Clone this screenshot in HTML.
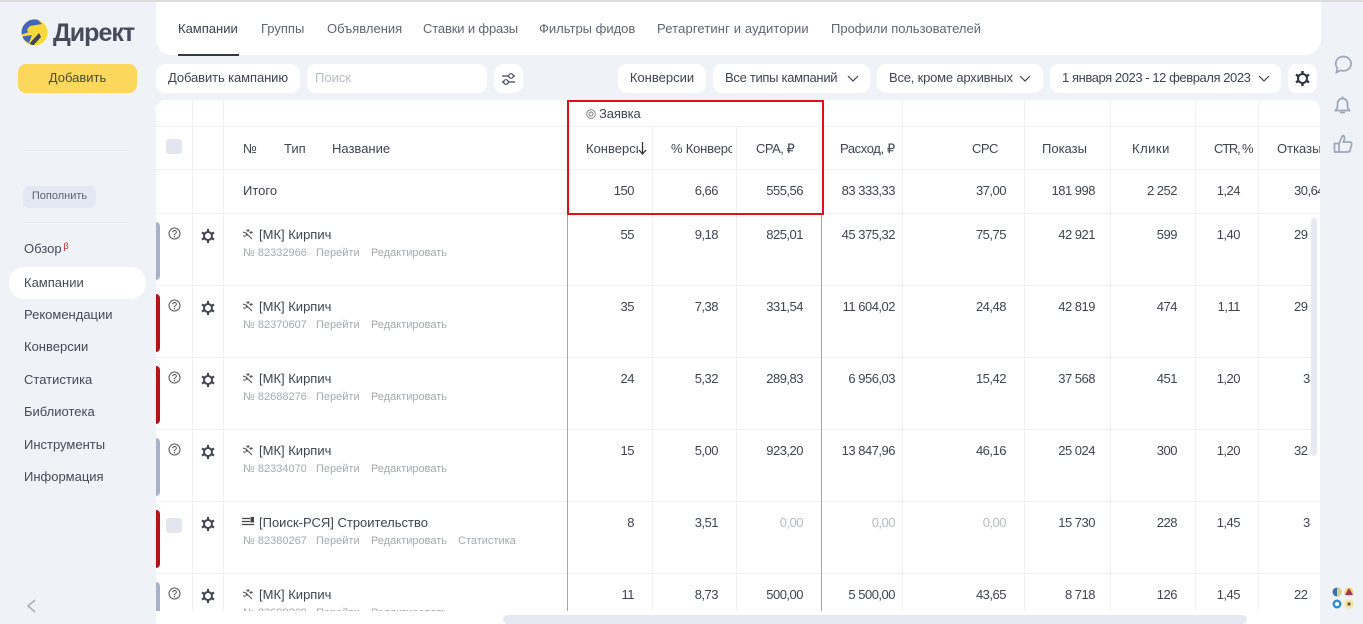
<!DOCTYPE html>
<html lang="ru"><head><meta charset="utf-8"><title>Директ</title>
<style>
*{box-sizing:border-box}
html,body{margin:0;padding:0;width:1363px;height:624px;overflow:hidden}
body{position:relative;background:#eff2f7;font:13px/16px "Liberation Sans",sans-serif;color:#3f4450}
.a{position:absolute;white-space:nowrap}
.btn{position:absolute;background:#fff;border-radius:9px;height:29px;line-height:28px;white-space:nowrap;top:64px}
.tab{position:absolute;top:21px;color:#5f6570;white-space:nowrap;line-height:16px}
.nav{position:absolute;left:24px;white-space:nowrap;color:#444a55}
.vl{position:absolute;width:1px;background:#eef0f3;top:100px;height:511px}
.hl{position:absolute;height:1px;background:#eef0f3;left:156px;width:1164px}
.hd{position:absolute;top:141px;white-space:nowrap}
.row{position:absolute;left:156px;width:1164px;height:72px;overflow:hidden}
.row span{position:absolute;top:13px;white-space:nowrap}
.c1,.c2,.c3,.c4,.c5,.c6,.c7,.c8,.c9{letter-spacing:-.5px}
.c1{right:686px}.c2{right:602px}.c3{right:517px}.c4{right:425px}.c5{right:314px}.c6{right:225px}.c7{right:143px}.c8{right:80px}
.row .c9{left:1138px}
.row .c9.s{left:1147px}
.row .g{color:#b7bac0}
.row .nm{left:103px;top:13px}
.sub{left:87px;top:31px;font-size:11px;color:#a6a9af;line-height:16px}
.sub b{font-weight:400;position:absolute;top:0}
.b1{left:0}.b2{left:73px}.b3{left:128px}.b4{left:215px}
.bar{position:absolute;left:0;top:8px;width:4px;height:58px;border-radius:0 4px 4px 0;background:#a9b3c8}
.red{background:#b5121b}
.cb{position:absolute;left:10px;top:16px;width:16px;height:15px;border-radius:3px;background:#e3e6ee}
svg{position:absolute;overflow:visible}
</style></head>
<body>
<div class="a" style="left:0;top:0;width:1363px;height:2px;background:#dcdcdc"></div>

<svg style="left:21px;top:19px" width="27" height="27" viewBox="0 0 27 27"><circle cx="13.500" cy="13.500" r="13" fill="#f9d93a"/><path d="M.5 13.500A13 13 0 0 1 17 .9L21 5 9 7C6 10 5 12 8 13L.8 15.500z" fill="#4366b5"/><path d="M1.500 17.500L11 16 8 24C4.500 22.500 2.500 20.500 1.500 17.500z" fill="#4366b5"/><path d="M8.500 24.500L18 14 20 18 12.500 26.200C11 26 9.700 25.300 8.500 24.500z" fill="#3f4555"/></svg>
<div class="a" style="left:53px;top:16px;font-size:25px;line-height:34px;font-weight:700;color:#454b59;letter-spacing:-1px">Директ</div>
<div class="a" style="left:18px;top:64px;width:119px;height:29px;background:#fbd75b;border-radius:8px;text-align:center;line-height:28px;color:#4b4a3c">Добавить</div>
<div class="a" style="left:24px;top:150px;width:104px;height:1px;background:#e6e9ef"></div>
<div class="a" style="left:23px;top:186px;width:73px;height:22px;background:#e3e8f2;border-radius:6px;text-align:center;line-height:21px;font-size:11px;color:#5d636e">Пополнить</div>
<div class="a" style="left:24px;top:222px;width:104px;height:1px;background:#e6e9ef"></div>
<div class="a" style="left:9px;top:267px;width:137px;height:32px;background:#fff;border-radius:15px"></div>
<div class="nav" style="top:241px">Обзор<span style="color:#c2242c;font-size:9px;position:relative;top:-4px;left:2px">β</span></div>
<div class="nav" style="top:275px">Кампании</div>
<div class="nav" style="top:307px">Рекомендации</div>
<div class="nav" style="top:339px">Конверсии</div>
<div class="nav" style="top:372px">Статистика</div>
<div class="nav" style="top:404px">Библиотека</div>
<div class="nav" style="top:437px">Инструменты</div>
<div class="nav" style="top:469px">Информация</div>
<svg style="left:25px;top:599px" width="12" height="14" viewBox="0 0 12 14"><path d="M10 1L3 7l7 6" fill="none" stroke="#a9b1c0" stroke-width="1.600"/></svg>

<div class="a" style="left:156px;top:2px;width:1165px;height:53px;background:#fff;border-radius:0 0 16px 16px"></div>
<div class="tab" style="left:178px;color:#3a3f4a">Кампании</div>
<div class="a" style="left:178px;top:54px;width:61px;height:2px;background:#333844"></div>
<div class="tab" style="left:261px">Группы</div>
<div class="tab" style="left:327px">Объявления</div>
<div class="tab" style="left:423px;letter-spacing:-.15px">Ставки и фразы</div>
<div class="tab" style="left:539px">Фильтры фидов</div>
<div class="tab" style="left:657px;letter-spacing:.13px">Ретаргетинг и аудитории</div>
<div class="tab" style="left:831px">Профили пользователей</div>

<div class="btn" style="left:156px;width:144px;padding-left:12px;letter-spacing:-.1px">Добавить кампанию</div>
<div class="btn" style="left:307px;width:180px;padding-left:8px;color:#b8bbc2">Поиск</div>
<div class="btn" style="left:494px;width:29px"></div>
<svg style="left:494px;top:64px" width="29" height="29" viewBox="0 0 29 29"><path d="M8 12h13M8 18h13" stroke="#3f4450" stroke-width="1.200"/><circle cx="17" cy="12" r="2.300" fill="#fff" stroke="#3f4450" stroke-width="1.200"/><circle cx="12" cy="18" r="2.300" fill="#fff" stroke="#3f4450" stroke-width="1.200"/></svg>
<div class="btn" style="left:618px;width:88px;text-align:center">Конверсии</div>
<div class="btn" style="left:713px;width:157px;padding-left:12px;letter-spacing:-.3px">Все типы кампаний</div>
<svg style="left:847px;top:75px" width="12" height="7" viewBox="0 0 12 7"><path d="M1 1l5 5 5-5" fill="none" stroke="#3f4450" stroke-width="1.200"/></svg>
<div class="btn" style="left:877px;width:166px;padding-left:12px;letter-spacing:-.2px">Все, кроме архивных</div>
<svg style="left:1019px;top:75px" width="12" height="7" viewBox="0 0 12 7"><path d="M1 1l5 5 5-5" fill="none" stroke="#3f4450" stroke-width="1.200"/></svg>
<div class="btn" style="left:1050px;width:231px;padding-left:12px;letter-spacing:-.43px">1 января 2023 - 12 февраля 2023</div>
<svg style="left:1258px;top:75px" width="12" height="7" viewBox="0 0 12 7"><path d="M1 1l5 5 5-5" fill="none" stroke="#3f4450" stroke-width="1.200"/></svg>
<div class="btn" style="left:1288px;width:29px"></div>
<svg style="left:1295px;top:71px" width="15" height="15" viewBox="0 0 15 15"><circle cx="7.500" cy="7.500" r="4.500" fill="none" stroke="#30343d" stroke-width="2"/><path d="M7.500 0v3M7.500 12v3M1 3.700l2.600 1.500M11.400 9.800L14 11.300M1 11.300l2.600-1.500M11.400 5.200L14 3.700" stroke="#30343d" stroke-width="2.400"/></svg>

<div class="a" style="left:156px;top:100px;width:1164px;height:511px;background:#fff;border-radius:10px 10px 0 0"></div>
<div class="a" style="left:156px;top:611px;width:1165px;height:13px;background:#fff"></div>
<div class="a" style="left:1320px;top:100px;width:1px;height:524px;background:#eff2f7"></div>

<div class="vl" style="left:192px"></div><div class="vl" style="left:223px"></div>
<div class="vl" style="left:652px;top:126px;height:485px"></div><div class="vl" style="left:736px;top:126px;height:485px"></div>
<div class="vl" style="left:902px"></div><div class="vl" style="left:1024px"></div><div class="vl" style="left:1110px"></div><div class="vl" style="left:1195px"></div><div class="vl" style="left:1258px"></div>
<div class="hl" style="top:126px"></div><div class="hl" style="top:169px"></div><div class="hl" style="top:213px"></div><div class="hl" style="top:285px"></div><div class="hl" style="top:357px"></div><div class="hl" style="top:429px"></div><div class="hl" style="top:501px"></div><div class="hl" style="top:573px"></div>
<div class="a" style="left:567px;top:214px;width:1px;height:397px;background:#a3a6ab"></div>
<div class="a" style="left:821px;top:214px;width:1px;height:397px;background:#a3a6ab"></div>

<div class="a" style="left:166px;top:139px;width:16px;height:15px;border-radius:3px;background:#e3e6ee"></div>
<div class="hd" style="left:243px">№</div><div class="hd" style="left:284px">Тип</div><div class="hd" style="left:332px">Название</div>
<svg style="left:586px;top:109px" width="10" height="10" viewBox="0 0 10 10"><circle cx="5" cy="5" r="4.300" fill="none" stroke="#777" stroke-width=".9"/><circle cx="5" cy="5" r="2" fill="none" stroke="#777" stroke-width=".9"/></svg>
<div class="a" style="left:599px;top:106px;letter-spacing:-.1px">Заявка</div>
<div class="a hd" style="left:586px;width:52px;overflow:hidden">Конверсии</div>
<svg style="left:638px;top:142px" width="9" height="13" viewBox="0 0 9 13"><path d="M4.500 0v12M1 8l3.500 4L8 8" fill="none" stroke="#333" stroke-width="1.300"/></svg>
<div class="a hd" style="left:671px;width:61px;overflow:hidden;letter-spacing:-.2px">% Конверсии</div>
<div class="a hd" style="left:756px;letter-spacing:-.5px">CPA, ₽</div>
<div class="a hd" style="left:840px;letter-spacing:-.4px">Расход, ₽</div>
<div class="a hd" style="left:972px;letter-spacing:-.5px">CPC</div>
<div class="a hd" style="left:1042px">Показы</div>
<div class="a hd" style="left:1132px;letter-spacing:.5px">Клики</div>
<div class="a hd" style="left:1214px;letter-spacing:-1.2px">CTR, %</div>
<div class="a hd" style="left:1277px;width:43px;overflow:hidden">Отказы</div>

<div class="row" style="top:170px;height:43px">
<span style="left:87px;top:13px">Итого</span><span class="c1">150</span><span class="c2">6,66</span><span class="c3">555,56</span><span class="c4">83 333,33</span><span class="c5">37,00</span><span class="c6">181 998</span><span class="c7">2 252</span><span class="c8">1,24</span><span class="c9">30,64</span>
</div>

<div class="row" style="top:214px"><i class="bar"></i>
<svg style="left:12px;top:13px" width="13" height="13" viewBox="0 0 13 13"><circle cx="6.500" cy="6.500" r="5.500" fill="none" stroke="#555" stroke-width="1"/><path d="M4.700 5.200c0-2.300 3.700-2.300 3.700 0 0 1.300-1.900 1.300-1.900 2.800" fill="none" stroke="#555"/><circle cx="6.500" cy="9.500" r=".7" fill="#555"/></svg>
<svg style="left:45px;top:15px" width="14" height="14" viewBox="0 0 15 15"><circle cx="7.500" cy="7.500" r="4.300" fill="none" stroke="#454a55" stroke-width="2.200"/><path d="M7.500 0v3M7.500 12v3M1 3.700l2.600 1.500M11.400 9.800L14 11.300M1 11.300l2.600-1.500M11.400 5.200L14 3.700" stroke="#454a55" stroke-width="2.400"/></svg>
<svg style="left:86px;top:14px" width="11" height="11" viewBox="0 0 11 11"><path d="M1 4l3 1 1 3M4 5l6 6M6 1v3M4.500 2.500h3M1 8h3M9 3v3M7.500 4.500h3" fill="none" stroke="#555" stroke-width="1.100"/></svg>
<span class="nm">[МК] Кирпич</span>
<div class="sub a"><b class="b1">№ 82332966</b><b class="b2">Перейти</b><b class="b3">Редактировать</b></div>
<span class="c1">55</span><span class="c2">9,18</span><span class="c3">825,01</span><span class="c4">45 375,32</span><span class="c5">75,75</span><span class="c6">42 921</span><span class="c7">599</span><span class="c8">1,40</span><span class="c9">29</span></div>

<div class="row" style="top:286px"><i class="bar red"></i>
<svg style="left:12px;top:13px" width="13" height="13" viewBox="0 0 13 13"><circle cx="6.500" cy="6.500" r="5.500" fill="none" stroke="#555" stroke-width="1"/><path d="M4.700 5.200c0-2.300 3.700-2.300 3.700 0 0 1.300-1.900 1.300-1.900 2.800" fill="none" stroke="#555"/><circle cx="6.500" cy="9.500" r=".7" fill="#555"/></svg>
<svg style="left:45px;top:15px" width="14" height="14" viewBox="0 0 15 15"><circle cx="7.500" cy="7.500" r="4.300" fill="none" stroke="#454a55" stroke-width="2.200"/><path d="M7.500 0v3M7.500 12v3M1 3.700l2.600 1.500M11.400 9.800L14 11.300M1 11.300l2.600-1.500M11.400 5.200L14 3.700" stroke="#454a55" stroke-width="2.400"/></svg>
<svg style="left:86px;top:14px" width="11" height="11" viewBox="0 0 11 11"><path d="M1 4l3 1 1 3M4 5l6 6M6 1v3M4.500 2.500h3M1 8h3M9 3v3M7.500 4.500h3" fill="none" stroke="#555" stroke-width="1.100"/></svg>
<span class="nm">[МК] Кирпич</span>
<div class="sub a"><b class="b1">№ 82370607</b><b class="b2">Перейти</b><b class="b3">Редактировать</b></div>
<span class="c1">35</span><span class="c2">7,38</span><span class="c3">331,54</span><span class="c4">11 604,02</span><span class="c5">24,48</span><span class="c6">42 819</span><span class="c7">474</span><span class="c8">1,11</span><span class="c9">29</span></div>

<div class="row" style="top:358px"><i class="bar red"></i>
<svg style="left:12px;top:13px" width="13" height="13" viewBox="0 0 13 13"><circle cx="6.500" cy="6.500" r="5.500" fill="none" stroke="#555" stroke-width="1"/><path d="M4.700 5.200c0-2.300 3.700-2.300 3.700 0 0 1.300-1.900 1.300-1.900 2.800" fill="none" stroke="#555"/><circle cx="6.500" cy="9.500" r=".7" fill="#555"/></svg>
<svg style="left:45px;top:15px" width="14" height="14" viewBox="0 0 15 15"><circle cx="7.500" cy="7.500" r="4.300" fill="none" stroke="#454a55" stroke-width="2.200"/><path d="M7.500 0v3M7.500 12v3M1 3.700l2.600 1.500M11.400 9.800L14 11.300M1 11.300l2.600-1.500M11.400 5.200L14 3.700" stroke="#454a55" stroke-width="2.400"/></svg>
<svg style="left:86px;top:14px" width="11" height="11" viewBox="0 0 11 11"><path d="M1 4l3 1 1 3M4 5l6 6M6 1v3M4.500 2.500h3M1 8h3M9 3v3M7.500 4.500h3" fill="none" stroke="#555" stroke-width="1.100"/></svg>
<span class="nm">[МК] Кирпич</span>
<div class="sub a"><b class="b1">№ 82688276</b><b class="b2">Перейти</b><b class="b3">Редактировать</b></div>
<span class="c1">24</span><span class="c2">5,32</span><span class="c3">289,83</span><span class="c4">6 956,03</span><span class="c5">15,42</span><span class="c6">37 568</span><span class="c7">451</span><span class="c8">1,20</span><span class="c9 s">3</span></div>

<div class="row" style="top:430px"><i class="bar"></i>
<svg style="left:12px;top:13px" width="13" height="13" viewBox="0 0 13 13"><circle cx="6.500" cy="6.500" r="5.500" fill="none" stroke="#555" stroke-width="1"/><path d="M4.700 5.200c0-2.300 3.700-2.300 3.700 0 0 1.300-1.900 1.300-1.900 2.800" fill="none" stroke="#555"/><circle cx="6.500" cy="9.500" r=".7" fill="#555"/></svg>
<svg style="left:45px;top:15px" width="14" height="14" viewBox="0 0 15 15"><circle cx="7.500" cy="7.500" r="4.300" fill="none" stroke="#454a55" stroke-width="2.200"/><path d="M7.500 0v3M7.500 12v3M1 3.700l2.600 1.500M11.400 9.800L14 11.300M1 11.300l2.600-1.500M11.400 5.200L14 3.700" stroke="#454a55" stroke-width="2.400"/></svg>
<svg style="left:86px;top:14px" width="11" height="11" viewBox="0 0 11 11"><path d="M1 4l3 1 1 3M4 5l6 6M6 1v3M4.500 2.500h3M1 8h3M9 3v3M7.500 4.500h3" fill="none" stroke="#555" stroke-width="1.100"/></svg>
<span class="nm">[МК] Кирпич</span>
<div class="sub a"><b class="b1">№ 82334070</b><b class="b2">Перейти</b><b class="b3">Редактировать</b></div>
<span class="c1">15</span><span class="c2">5,00</span><span class="c3">923,20</span><span class="c4">13 847,96</span><span class="c5">46,16</span><span class="c6">25 024</span><span class="c7">300</span><span class="c8">1,20</span><span class="c9">32</span></div>

<div class="row" style="top:502px"><i class="bar red"></i><i class="cb"></i>
<svg style="left:45px;top:15px" width="14" height="14" viewBox="0 0 15 15"><circle cx="7.500" cy="7.500" r="4.300" fill="none" stroke="#454a55" stroke-width="2.200"/><path d="M7.500 0v3M7.500 12v3M1 3.700l2.600 1.500M11.400 9.800L14 11.300M1 11.300l2.600-1.500M11.400 5.200L14 3.700" stroke="#454a55" stroke-width="2.400"/></svg>
<svg style="left:86px;top:15px" width="12" height="10" viewBox="0 0 12 10"><path d="M0 1.500h8M0 4.500h8M0 7.500h12" stroke="#444" stroke-width="1.300"/><rect x="8.500" y="0" width="3.500" height="5.500" fill="#444"/></svg>
<span class="nm">[Поиск-РСЯ] Строительство</span>
<div class="sub a"><b class="b1">№ 82380267</b><b class="b2">Перейти</b><b class="b3">Редактировать</b><b class="b4">Статистика</b></div>
<span class="c1">8</span><span class="c2">3,51</span><span class="c3 g">0,00</span><span class="c4 g">0,00</span><span class="c5 g">0,00</span><span class="c6">15 730</span><span class="c7">228</span><span class="c8">1,45</span><span class="c9 s">3</span></div>

<div class="row" style="top:574px;height:37px"><i class="bar"></i>
<svg style="left:12px;top:13px" width="13" height="13" viewBox="0 0 13 13"><circle cx="6.500" cy="6.500" r="5.500" fill="none" stroke="#555" stroke-width="1"/><path d="M4.700 5.200c0-2.300 3.700-2.300 3.700 0 0 1.300-1.900 1.300-1.900 2.800" fill="none" stroke="#555"/><circle cx="6.500" cy="9.500" r=".7" fill="#555"/></svg>
<svg style="left:45px;top:15px" width="14" height="14" viewBox="0 0 15 15"><circle cx="7.500" cy="7.500" r="4.300" fill="none" stroke="#454a55" stroke-width="2.200"/><path d="M7.500 0v3M7.500 12v3M1 3.700l2.600 1.500M11.400 9.800L14 11.300M1 11.300l2.600-1.500M11.400 5.200L14 3.700" stroke="#454a55" stroke-width="2.400"/></svg>
<svg style="left:86px;top:14px" width="11" height="11" viewBox="0 0 11 11"><path d="M1 4l3 1 1 3M4 5l6 6M6 1v3M4.500 2.500h3M1 8h3M9 3v3M7.500 4.500h3" fill="none" stroke="#555" stroke-width="1.100"/></svg>
<span class="nm">[МК] Кирпич</span>
<div class="sub a"><b class="b1">№ 82688269</b><b class="b2">Перейти</b><b class="b3">Редактировать</b></div>
<span class="c1">11</span><span class="c2">8,73</span><span class="c3">500,00</span><span class="c4">5 500,00</span><span class="c5">43,65</span><span class="c6">8 718</span><span class="c7">126</span><span class="c8">1,45</span><span class="c9">22</span></div>

<div class="a" style="left:567px;top:100px;width:257px;height:115px;border:2.500px solid #e0101a"></div>
<div class="a" style="left:1311px;top:218px;width:6px;height:238px;background:#e6e9f1;border-radius:3px"></div>
<div class="a" style="left:503px;top:615px;width:744px;height:9px;background:#e6e9f1;border-radius:5px"></div>

<svg style="left:1334px;top:55px" width="18" height="20" viewBox="0 0 18 20"><path d="M9.500 1.500a7.700 7.200 0 1 1-3.200 13.800L2.500 17.500l.8-4.500A7.700 7.200 0 0 1 9.500 1.500z" fill="none" stroke="#9ba6bc" stroke-width="1.700"/></svg>
<svg style="left:1334px;top:96px" width="17" height="20" viewBox="0 0 17 20"><path d="M1.500 14.500h14l-2-3V7.500a5 5 0 0 0-10 0v4zM8.500 .5v2M6 16.500h5" fill="none" stroke="#9ba6bc" stroke-width="1.700"/></svg>
<svg style="left:1333px;top:134px" width="20" height="20" viewBox="0 0 20 20"><path d="M1.500 9.500h4.500v8.500H1.500zM6 9.500L9.500 1.500c2 .3 2.500 2 1.800 4L10.500 8h6c2 0 2.500 1.500 2 3l-1.500 5.500c-.3 1-1 1.500-2 1.500H6" fill="none" stroke="#9ba6bc" stroke-width="1.700"/></svg>
<svg style="left:1332px;top:587px" width="24" height="24" viewBox="0 0 24 24"><circle cx="5" cy="5" r="4.500" fill="#3f6fb0"/><path d="M5 .5a4.500 4.500 0 0 1 0 9z" fill="#d8cf8c"/><circle cx="17" cy="5" r="4.500" fill="#f3d46a"/><path d="M17 1l4 7h-8z" fill="#a0345a"/><circle cx="5" cy="17" r="4.500" fill="#2f8fd0"/><circle cx="5" cy="17" r="2" fill="#fff"/><rect x="12.500" y="12.500" width="9" height="9" rx="3" fill="#f6e7a6"/><rect x="15.500" y="15.500" width="3" height="3" fill="#555"/></svg>
</body></html>
